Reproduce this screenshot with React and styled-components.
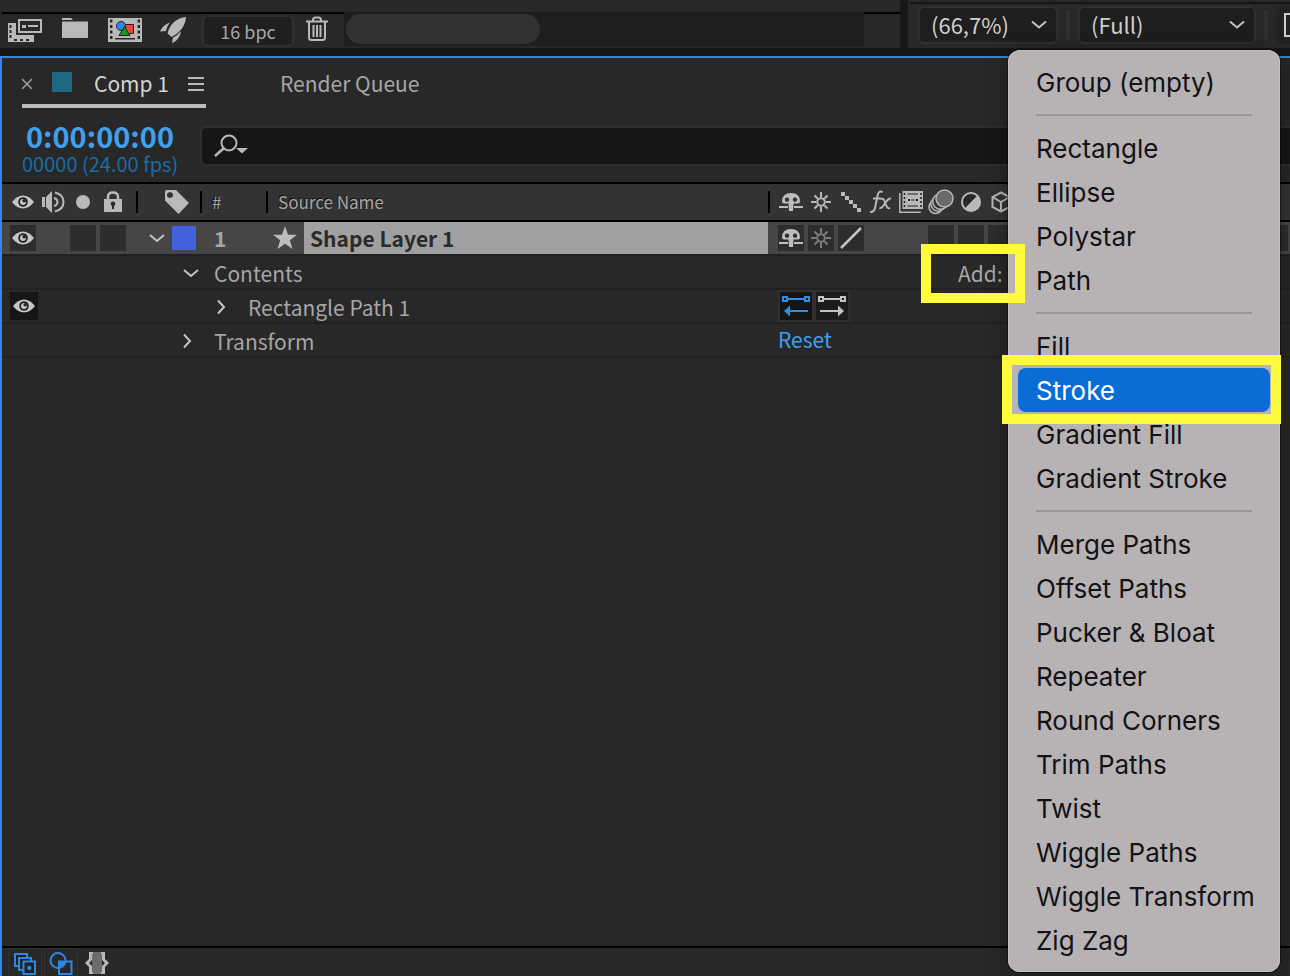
import React from "react";
import styled, { createGlobalStyle } from "styled-components";

const ui = `"Noto Sans CJK SC", "Noto Sans", sans-serif`;

const GlobalStyle = createGlobalStyle`
  *, *::before, *::after { box-sizing: border-box; }
  body { margin: 0; background: #171717; color: #a6a6a6; font-family: ${ui}; font-size: 21px; line-height: 28px; }
  button, input, select { font: inherit; color: inherit; margin: 0; padding: 0; border: 0; background: none; }
  svg { display: block; flex: none; }
`;

const Page = styled.div`
  position: relative;
  min-height: 100vh;
  display: flex;
  flex-direction: column;
  gap: 8px;
  overflow: hidden;
`;

/* ---------- top panels ---------- */
const TopArea = styled.div`
  display: flex;
  gap: 8px;
  height: 48px;
`;
const ProjectPanel = styled.section`
  flex: 1;
  min-width: 0;
  padding: 12px 0 0 2px;
  background: #282828;
`;
const ProjectBar = styled.div`
  display: flex;
  align-items: center;
  height: 36px;
  padding-left: 6px;
  border-top: 2px solid #000;
`;
const IconGroup = styled.div`
  display: flex;
  align-items: center;
  gap: 18px;
  padding-bottom: 2px;
`;
const IconButton = styled.button`
  display: flex;
  align-items: center;
  justify-content: center;
  flex: none;
`;
const DepthButton = styled.button`
  width: 92px;
  height: 32px;
  margin: 0 11px 0 16px;
  border: 2px solid #303030;
  border-radius: 6px;
  background: #1f1f1f;
  font-size: 18px;
  line-height: 26px;
`;
const DeleteButton = styled(IconButton)`
  padding-bottom: 4px;
`;
const ScrollTrack = styled.div`
  flex: 1;
  align-self: flex-start;
  height: 34px;
  margin: -2px 36px 0 15px;
  padding: 2px;
  background: #1e1e1e;
`;
const ScrollThumb = styled.div`
  width: 194px;
  height: 30px;
  border-radius: 15px;
  background: #323232;
`;
const ViewerPanel = styled.section`
  width: 382px;
  padding: 2px 0 0 2px;
  background: #282828;
  overflow: hidden;
`;
const ViewerBar = styled.div`
  display: flex;
  align-items: center;
  gap: 8px;
  height: 44px;
  padding-left: 8px;
  border-top: 2px solid #151515;
`;
const SelectBox = styled.div`
  display: flex;
  align-items: center;
  flex: none;
  width: ${(p) => p.$width}px;
  height: 38px;
  padding: 0 9px 0 11px;
  border: 2px solid #303030;
  border-radius: 6px;
  background: #1e1e1e;
  color: #cfcfcf;
  font-size: 22px;
  select { flex: 1; min-width: 0; padding-bottom: 2px; appearance: none; outline: 0; }
`;
const BarDivider = styled.span`
  flex: none;
  width: 4px;
  height: 30px;
  background: #303030;
`;
const ClippedButton = styled.button`
  flex: none;
  width: 48px;
  height: 38px;
  padding-left: 6px;
  border: 2px solid #222;
  border-radius: 6px;
  background: #222;
`;

/* ---------- timeline panel ---------- */
const Timeline = styled.section`
  flex: 1;
  display: flex;
  flex-direction: column;
  border-top: 2px solid #3c85cc;
  border-left: 2px solid #2f8af0;
  background: #282828;
`;
const Tabs = styled.div`
  display: flex;
  align-items: flex-start;
  height: 60px;
  padding-left: 20px;
  gap: 74px;
`;
const ActiveTab = styled.div`
  display: flex;
  align-items: center;
  width: 184px;
  height: 50px;
  padding-top: 4px;
  border-bottom: 4px solid #bdbdbd;
  color: #d4d4d4;
`;
const Swatch = styled.span`
  flex: none;
  width: 20px;
  height: 20px;
  margin: 0 22px 2px 20px;
  background: #1f6984;
`;
const TabButton = styled.button`
  height: 46px;
  padding-top: 4px;
`;
const TabTitle = styled.button`
  margin-right: auto;
`;
const Head = styled.div`
  display: flex;
  align-items: center;
  height: 64px;
  gap: 22px;
  padding-left: 20px;
`;
const TimeBox = styled.div`
  width: 156px;
  margin-bottom: 4px;
  text-align: center;
  white-space: nowrap;
`;
const Timecode = styled.div`
  color: #41a0ee;
  font-size: 29px;
  font-weight: 700;
  line-height: 32px;
`;
const Frames = styled.div`
  color: #176ea8;
  font-size: 20px;
  line-height: 26px;
`;
const SearchBox = styled.label`
  flex: 1;
  display: flex;
  align-items: center;
  height: 40px;
  margin-bottom: 8px;
  padding-left: 12px;
  border: 2px solid #2f2f2f;
  border-right: 0;
  border-radius: 6px 0 0 6px;
  background: #161616;
  input { flex: 1; outline: 0; }
`;
const Row = styled.div`
  display: flex;
  align-items: center;
  height: 34px;
  border-bottom: 2px solid #212121;
  white-space: nowrap;
`;
const HeaderRow = styled(Row)`
  height: 40px;
  border-top: 2px solid #000;
  border-bottom-color: #000;
  background: #333;
  font-size: 17px;
  text-shadow: -1px -1px 0 #111;
`;
const LayerRow = styled(Row)`
  background: #464646;
`;
const AvColumn = styled.div`
  display: flex;
  flex: none;
  width: 134px;
  padding-left: 6px;
`;
const Cell = styled.div`
  display: flex;
  align-items: center;
  justify-content: center;
  width: 30px;
`;
const SwitchButton = styled.button`
  display: flex;
  align-items: center;
  justify-content: center;
  flex: none;
  width: ${(p) => (p.$dark ? 28 : 26)}px;
  height: ${(p) => (p.$dark ? 28 : 26)}px;
  margin: 0 2px;
  background: ${(p) => (p.$empty ? "none" : p.$dark ? "#161616" : "#2d2d2d")};
`;
const Divider = styled.span`
  flex: none;
  width: 2px;
  height: 22px;
  background: ${(p) => (p.$clear ? "none" : "#000")};
`;
const LabelColumn = styled.div`
  display: flex;
  align-items: center;
  justify-content: flex-end;
  flex: none;
  gap: 6px;
  width: 62px;
  padding-right: ${(p) => p.$pad}px;
`;
const NumberColumn = styled.div`
  flex: none;
  width: 64px;
  padding-left: ${(p) => p.$pad}px;
`;
const NameHeading = styled.div`
  flex: 1;
  padding-left: 10px;
`;
const TypeColumn = styled.div`
  display: flex;
  justify-content: center;
  width: 36px;
  padding-right: 2px;
`;
const LayerName = styled.div`
  flex: 1;
  height: 32px;
  padding-left: 6px;
  background: #a0a0a0;
  color: #2a2a2a;
  font-weight: 700;
  line-height: 32px;
`;
const LayerLabel = styled.span`
  width: 24px;
  height: 24px;
  background: #4360e0;
`;
const Switches = styled.div`
  display: flex;
  align-items: center;
  flex: none;
  width: 520px;
  padding-left: ${(p) => (p.$values ? 8 : 6)}px;
`;
const LastSwitch = styled.span`
  width: 18px;
  height: 26px;
  margin: 0 2px 0 auto;
  background: #2d2d2d;
`;
const Property = styled.div`
  display: flex;
  align-items: center;
  flex: 1;
  gap: 14px;
  padding: 2px 0 0 ${(p) => p.$indent}px;
`;
const PathButton = styled.button`
  display: flex;
  align-items: center;
  justify-content: center;
  width: 36px;
  height: 32px;
  border: 2px solid #303030;
  background: ${(p) => (p.$on ? "#151515" : "#1c1c1c")};
`;
const ResetButton = styled.button`
  padding-bottom: 2px;
  color: #41a0ee;
`;
const AddButton = styled.button`
  position: relative;
  margin-left: 180px;
  padding-top: 2px;
`;
const Mark = styled.span`
  position: absolute;
  inset: ${(p) => p.$inset};
  border: 10px solid #fffb3c;
  z-index: 3;
  pointer-events: none;
`;
const Canvas = styled.div`
  flex: 1;
`;
const Footer = styled.div`
  display: flex;
  height: 30px;
  gap: 2px;
  padding-left: 6px;
  border-top: 2px solid #000;
  overflow: hidden;
`;
const FooterButton = styled.button`
  flex: none;
  display: flex;
  justify-content: center;
  width: 34px;
  height: 34px;
  padding-top: 3px;
  border: 1px solid ${(p) => (p.$flat ? "transparent" : "#323232")};
`;

/* ---------- menu ---------- */
const Menu = styled.div`
  position: absolute;
  z-index: 2;
  top: 50px;
  right: 10px;
  width: 272px;
  padding: 10px;
  border-radius: 12px;
  background: #b7b3b5;
  box-shadow: 0 0 0 1px rgba(0, 0, 0, 0.4), 0 4px 24px rgba(0, 0, 0, 0.35), inset 0 0 0 1px #c4c0c2;
  font-family: Inter, sans-serif;
`;
const MenuItem = styled.button`
  position: relative;
  display: block;
  width: 100%;
  height: 44px;
  padding: 2px 0 0 18px;
  border-radius: 8px;
  background: ${(p) => (p.$active ? "#0a6dd6" : "none")};
  color: ${(p) => (p.$active ? "#fff" : "#141214")};
  font-size: 26px;
  text-align: left;
  white-space: nowrap;
`;
const MenuSeparator = styled.hr`
  height: 2px;
  margin: 10px 18px;
  border: 0;
  background: #9c989a;
`;

/* ---------- icons ---------- */
const G = "#b9b9b9";

const CompsIcon = () => (
  <svg width="34" height="24" viewBox="0 0 34 24">
    <path fill={G} fillRule="evenodd" d="M0 5h8v3H8v9h18v7H0zM1.500 7v3h2V7zM1.500 12v3h2v-3zM1.500 17v3h2v-3zM6 21v2h3v-2zM12 21v2h3v-2zM18 21v2h3v-2z" />
    <rect x="11" y="2" width="22" height="12" fill="#282828" stroke={G} strokeWidth="2" />
    <path fill={G} d="M14 7h4v3h-4zM20 7h10v2H20z" />
  </svg>
);
const FolderIcon = () => (
  <svg width="30" height="24" viewBox="0 0 30 24">
    <path fill={G} d="M2 0h9l2 2H2zM2 3.500h26V20H2z" />
  </svg>
);
const FilmIcon = () => (
  <svg width="34" height="24" viewBox="0 0 34 24">
    <path fill={G} d="M0 0h34v24H0z" />
    <path stroke="#282828" strokeWidth="2.500" strokeDasharray="3 2.500" d="M3.200 1.500v22M30.800 1.500v22" />
    <path fill="#282828" d="M7 20h20v1.500H7z" />
    <path fill="#ee4540" stroke="#222" d="M17.500 6.500h8v9h-8z" />
    <circle cx="13" cy="8" r="4.500" fill="#2f8ae6" stroke="#222" />
    <path fill="#139a1d" stroke="#222" d="M16.500 8.500l5.500 9H11z" />
  </svg>
);
const RocketIcon = () => (
  <svg width="26" height="26" viewBox="0 0 26 26">
    <path fill={G} d="M26 0C17 1 10 6 7.500 16.500l4 3.500C21 15 25.500 8 26 0z" />
    <path fill={G} d="M10 5.500C5 7 2 10 0 14.500l6-.5c.5-3 2-6 4-8.500zM21 14c-2 2.500-5 5-8 6.500l-1 5.500c5-2 8-6 9-12z" />
  </svg>
);
const TrashIcon = () => (
  <svg width="24" height="26" viewBox="0 0 24 26" fill="none" stroke={G} strokeWidth="2">
    <path d="M1 5.500h22M8 5V4q0-2.500 2.500-2.500h3Q16 1.500 16 4v1M4 6v15.500q0 2.500 2.500 2.500h11q2.500 0 2.500-2.500V6M8.500 9v12M12 9v12M15.500 9v12" />
  </svg>
);
const ChevronDown = () => (
  <svg width="16" height="10" viewBox="0 0 16 10" fill="none" stroke="#c4c4c4" strokeWidth="2">
    <path d="M1 1.500l7 6 7-6" />
  </svg>
);
const Twirl = ({ open }) => (
  <svg width="20" height="20" viewBox="0 0 20 20" fill="none" stroke="#c4c4c4" strokeWidth="2">
    <path d={open ? "M4 7l7 6 7-6" : "M4 3.500l6 6.500-6 6.500"} />
  </svg>
);
const MenuLines = () => (
  <svg width="20" height="20" viewBox="0 0 20 20" fill={G}>
    <path d="M2 4h16v2H2zM2 10h16v2H2zM2 16h16v2H2z" />
  </svg>
);
const CloseIcon = () => (
  <svg width="10" height="12" viewBox="0 0 10 12" stroke="#a0a0a0" strokeWidth="1.500">
    <path d="M0 2l10 10M10 2L0 12" />
  </svg>
);
const SearchIcon = () => (
  <svg width="36" height="24" viewBox="0 0 36 24">
    <circle cx="15" cy="9" r="7.500" fill="none" stroke={G} strokeWidth="2" />
    <path d="M9.500 14.500L1 22" stroke={G} strokeWidth="2.500" />
    <path d="M22 14h12l-6 5.500z" fill={G} />
  </svg>
);
const EyeIcon = () => (
  <svg width="22" height="16" viewBox="0 0 22 16">
    <path d="M0 8Q5 1.500 11 1.500T22 8q-5 6.500-11 6.500T0 8z" fill="#c6c6c6" />
    <circle cx="11" cy="8" r="4.800" fill="#222" />
    <circle cx="11" cy="8" r="3" fill="#c6c6c6" />
    <circle cx="12.200" cy="6.800" r="1.800" fill="#222" />
  </svg>
);
const SpeakerIcon = () => (
  <svg width="24" height="22" viewBox="0 0 24 22">
    <path fill={G} d="M1 6h3v10H1zM5 6l6-6v22l-6-6z" />
    <path fill="none" stroke={G} strokeWidth="2" d="M13 7q3.500 1 3.500 4T13 15M14 1.500q8.500 2 8.500 9.500T14 20.500" />
  </svg>
);
const DotIcon = () => (
  <svg width="14" height="14" viewBox="0 0 14 14"><circle cx="7" cy="7" r="7" fill={G} /></svg>
);
const LockIcon = () => (
  <svg width="18" height="22" viewBox="0 0 18 22">
    <path fill="none" stroke={G} strokeWidth="2.500" d="M4 10V6q0-4.500 5-4.500T14 6v4" />
    <path fill={G} d="M0 8h18v13H0z" />
    <path fill="#282828" d="M9 10.500a2.300 2.300 0 0 1 1 4.400V18H8v-3.100a2.300 2.300 0 0 1 1-4.400z" />
  </svg>
);
const TagIcon = () => (
  <svg width="24" height="24" viewBox="0 0 24 24">
    <path fill={G} fillRule="evenodd" d="M0 2q0-2 2-2h9l13 13-10.500 11L0 10.500zM5 2a3 3 0 1 0 .01 0z" />
  </svg>
);
const StarIcon = () => (
  <svg width="24" height="24" viewBox="0 0 24 24">
    <path fill="#bdbdbd" d="M12 0l3 8.700h9l-7.200 5.500L19.500 23 12 17.700 4.500 23l2.700-8.800L0 8.700h9z" />
  </svg>
);
const ShyIcon = () => (
  <svg width="24" height="20" viewBox="0 0 24 20">
    <path fill="#bdbdbd" fillRule="evenodd" d="M3 9.500Q3 1 12 1t9 8.500q0 2-2 2h-4.500L14 19h-4l-.5-7.500H5q-2 0-2-2zM8 5.500a2.200 2.200 0 1 0 .01 0zM16 5.500a2.200 2.200 0 1 0 .01 0z" />
    <path fill="#bdbdbd" d="M0 14h9v2H0zM15 14h9v2h-9z" />
  </svg>
);
const SunIcon = ({ color = G }) => (
  <svg width="20" height="20" viewBox="0 0 20 20" fill="none" stroke={color} strokeWidth="2">
    <circle cx="10" cy="10" r="3.800" />
    <path d="M10 0v5M10 15v5M0 10h5M15 10h5M3.500 3.500L6.500 6.500M13.500 13.500l3 3M16.500 3.500l-3 3M6.500 13.500l-3 3" />
  </svg>
);
const StepsIcon = () => (
  <svg width="20" height="20" viewBox="0 0 20 20" fill={G}>
    <path d="M0 0h4v4H0zM4 4h4v4H4zM8 8h4v4H8zM12 12h4v4h-4zM16 16h4v4h-4z" />
  </svg>
);
const FxIcon = () => (
  <svg width="22" height="24" viewBox="0 0 22 24" fill="none" stroke={G} strokeWidth="2">
    <path d="M12.500 2.200Q8.500 0 7.500 6L5 18q-1 4.500-5 3.800M3 8.500h8" />
    <path d="M11 9q2.500-1 3.500 2l2 5q1 3 3.500 2M21 8.700q-2-.7-4 2l-4 5.500q-1.500 2.300-3.500 1.500" />
  </svg>
);
const FrameBlendIcon = () => (
  <svg width="24" height="22" viewBox="0 0 24 22">
    <path fill="none" stroke={G} strokeWidth="1.500" d="M.8 2v19.200h21" />
    <path fill={G} d="M3.500 0H24v18H3.500z" />
    <path stroke="#222" strokeWidth="1.500" strokeDasharray="2 2" d="M5.500 2v15M22 2v15" />
    <path fill="#222" d="M8.500 2.500h10.500v1H8.500zM8.500 14.500h10.500v1H8.500zM9 8h2v2H9zM17 8h2v2h-2zM12 8.500h4v1h-4z" />
  </svg>
);
const MotionBlurIcon = () => (
  <svg width="26" height="26" viewBox="0 0 26 26" stroke={G} strokeWidth="1.500">
    <circle cx="7.500" cy="18" r="6.500" fill="#333" />
    <circle cx="10" cy="15" r="7.200" fill="#333" />
    <circle cx="12.500" cy="12.500" r="7.800" fill="#333" />
    <circle cx="16.500" cy="9.500" r="8.500" fill="#6a6a6a" />
  </svg>
);
const AdjustmentIcon = () => (
  <svg width="22" height="22" viewBox="0 0 22 22">
    <circle cx="11" cy="11" r="9" fill="#282828" stroke={G} strokeWidth="2" />
    <path fill={G} d="M4.600 17.400A9 9 0 0 0 17.400 4.600z" />
  </svg>
);
const CubeIcon = () => (
  <svg width="20" height="22" viewBox="0 0 20 22" fill="none" stroke={G} strokeWidth="2">
    <path d="M10 1.500l8.500 4.500v10L10 20.500 1.500 16V6zM1.500 6L10 11l8.500-5M10 11v9.500" />
  </svg>
);
const SlashIcon = () => (
  <svg width="22" height="22" viewBox="0 0 22 22"><path d="M1 21L21 1" stroke="#c6c6c6" strokeWidth="2.500" /></svg>
);
const PathDirIcon = ({ reverse }) => {
  const c = reverse ? "#2f8eec" : "#c4c4c4";
  return (
    <svg width="28" height="22" viewBox="0 0 28 22" fill="none" stroke={c} strokeWidth="2">
      <path d="M1 2h4v4H1zM23 2h4v4h-4zM5 4h18" />
      {reverse ? <path d="M8 16h18" /> : <path d="M2 16h18" />}
      <path fill={c} stroke="none" d={reverse ? "M2 16l6-5.500v11z" : "M26 16l-6-5.500v11z"} />
    </svg>
  );
};
const FrameIcon = () => (
  <svg width="24" height="24" viewBox="0 0 24 24" fill="none" stroke="#cfcfcf" strokeWidth="2"><path d="M1 1h22v22H1z" /></svg>
);
const LayersIcon = () => (
  <svg width="24" height="24" viewBox="0 0 24 24" fill="#222" stroke="#2f86dc" strokeWidth="2">
    <path d="M2 2h12v12H2z" /><path d="M6 6h12v12H6z" /><path d="M10.500 9.500H22V22H10.500z" />
    <circle cx="16.300" cy="16" r="2.200" fill="#2f86dc" stroke="none" />
  </svg>
);
const ModesIcon = () => (
  <svg width="24" height="24" viewBox="0 0 24 24" fill="none" stroke="#2f86dc" strokeWidth="2">
    <path d="M10 10h6.500A8 8 0 0 1 10 16z" fill="#2f86dc" stroke="none" />
    <circle cx="9" cy="8.500" r="7.500" /><path d="M10 9.500h12.500V22H10z" />
  </svg>
);
const BracesIcon = () => (
  <svg width="24" height="24" viewBox="0 0 24 24">
    <path fill="#6c6c6c" d="M7 0h10v22H7z" />
    <path fill={G} d="M4 0h4v2H7v6l-3 3 3 3v6h1v2H4v-7l-4-4 4-4zM20 0h-4v2h1v6l3 3-3 3v6h-1v2h4v-7l4-4-4-4z" />
  </svg>
);

const menuGroups = [
  ["Group (empty)"],
  ["Rectangle", "Ellipse", "Polystar", "Path"],
  ["Fill", "Stroke", "Gradient Fill", "Gradient Stroke"],
  ["Merge Paths", "Offset Paths", "Pucker & Bloat", "Repeater", "Round Corners", "Trim Paths", "Twist", "Wiggle Paths", "Wiggle Transform", "Zig Zag"],
];

const headerSwitches = [ShyIcon, SunIcon, StepsIcon, FxIcon, FrameBlendIcon, MotionBlurIcon, AdjustmentIcon, CubeIcon];

function ShapeMenu() {
  return (
    <Menu role="menu" aria-label="Add">
      {menuGroups.map((group, i) => (
        <React.Fragment key={group[0]}>
          {i > 0 && <MenuSeparator />}
          {group.map((name) => (
            <MenuItem key={name} role="menuitem" $active={name === "Stroke"}>
              {name}
              {name === "Stroke" && <Mark $inset="-13px -11px -12px -16px" />}
            </MenuItem>
          ))}
        </React.Fragment>
      ))}
    </Menu>
  );
}

export default function App() {
  return (
    <Page>
      <GlobalStyle />
      <TopArea>
        <ProjectPanel>
          <ProjectBar>
            <IconGroup>
              <IconButton aria-label="Interpret footage"><CompsIcon /></IconButton>
              <IconButton aria-label="New folder"><FolderIcon /></IconButton>
              <IconButton aria-label="New composition"><FilmIcon /></IconButton>
              <IconButton aria-label="Project settings"><RocketIcon /></IconButton>
            </IconGroup>
            <DepthButton>16 bpc</DepthButton>
            <DeleteButton aria-label="Delete"><TrashIcon /></DeleteButton>
            <ScrollTrack><ScrollThumb /></ScrollTrack>
          </ProjectBar>
        </ProjectPanel>
        <ViewerPanel>
          <ViewerBar>
            <SelectBox $width={140}>
              <select aria-label="Magnification"><option>(66,7%)</option></select>
              <ChevronDown />
            </SelectBox>
            <BarDivider />
            <SelectBox $width={178}>
              <select aria-label="Resolution"><option>(Full)</option></select>
              <ChevronDown />
            </SelectBox>
            <BarDivider />
            <ClippedButton aria-label="Region of interest"><FrameIcon /></ClippedButton>
          </ViewerBar>
        </ViewerPanel>
      </TopArea>

      <Timeline>
        <Tabs>
          <ActiveTab>
            <IconButton aria-label="Close tab"><CloseIcon /></IconButton>
            <Swatch />
            <TabTitle>Comp 1</TabTitle>
            <IconButton aria-label="Panel menu"><MenuLines /></IconButton>
          </ActiveTab>
          <TabButton>Render Queue</TabButton>
        </Tabs>
        <Head>
          <TimeBox>
            <Timecode>0:00:00:00</Timecode>
            <Frames>00000 (24.00 fps)</Frames>
          </TimeBox>
          <SearchBox>
            <SearchIcon />
            <input type="text" aria-label="Search layers" />
          </SearchBox>
        </Head>

        <HeaderRow>
          <AvColumn>
            <Cell><EyeIcon /></Cell>
            <Cell><SpeakerIcon /></Cell>
            <Cell><DotIcon /></Cell>
            <Cell><LockIcon /></Cell>
          </AvColumn>
          <Divider />
          <LabelColumn $pad={11}><TagIcon /></LabelColumn>
          <Divider />
          <NumberColumn $pad={10}>#</NumberColumn>
          <Divider />
          <NameHeading>Source Name</NameHeading>
          <Divider />
          <Switches>
            {headerSwitches.map((Icon, i) => <Cell key={i}><Icon /></Cell>)}
          </Switches>
        </HeaderRow>

        <LayerRow>
          <AvColumn>
            <SwitchButton aria-label="Layer visibility"><EyeIcon /></SwitchButton>
            <SwitchButton $empty aria-label="Audio" />
            <SwitchButton aria-label="Solo" />
            <SwitchButton aria-label="Lock" />
          </AvColumn>
          <Divider $clear />
          <LabelColumn $pad={4}>
            <IconButton aria-label="Collapse layer"><Twirl open /></IconButton>
            <LayerLabel />
          </LabelColumn>
          <Divider $clear />
          <NumberColumn $pad={12}><b>1</b></NumberColumn>
          <Divider $clear />
          <TypeColumn><StarIcon /></TypeColumn>
          <LayerName>Shape Layer 1</LayerName>
          <Divider $clear />
          <Switches>
            <SwitchButton aria-label="Shy"><ShyIcon /></SwitchButton>
            <SwitchButton aria-label="Continuously rasterize"><SunIcon color="#7c7c7c" /></SwitchButton>
            <SwitchButton aria-label="Quality"><SlashIcon /></SwitchButton>
            <SwitchButton $empty aria-label="Effects" />
            <SwitchButton $empty aria-label="Frame blending" />
            <SwitchButton aria-label="Motion blur" />
            <SwitchButton aria-label="Adjustment layer" />
            <SwitchButton aria-label="3D layer" />
            <LastSwitch />
          </Switches>
        </LayerRow>

        <Row>
          <AvColumn />
          <Property $indent={44}>
            <IconButton aria-label="Collapse contents"><Twirl open /></IconButton>
            Contents
          </Property>
          <Switches $values>
            <AddButton aria-haspopup="menu">
              Add:
              <Mark $inset="-13px -22px -16px -37px" />
            </AddButton>
          </Switches>
        </Row>

        <Row>
          <AvColumn>
            <SwitchButton $dark aria-label="Path visibility"><EyeIcon /></SwitchButton>
          </AvColumn>
          <Property $indent={78}>
            <IconButton aria-label="Expand path"><Twirl /></IconButton>
            Rectangle Path 1
          </Property>
          <Switches $values>
            <PathButton $on aria-label="Reverse path direction"><PathDirIcon reverse /></PathButton>
            <PathButton aria-label="Forward path direction"><PathDirIcon /></PathButton>
          </Switches>
        </Row>

        <Row>
          <AvColumn />
          <Property $indent={44}>
            <IconButton aria-label="Expand transform"><Twirl /></IconButton>
            Transform
          </Property>
          <Switches $values><ResetButton>Reset</ResetButton></Switches>
        </Row>

        <Canvas />
        <Footer>
          <FooterButton aria-label="Toggle layer switches"><LayersIcon /></FooterButton>
          <FooterButton aria-label="Toggle transfer modes"><ModesIcon /></FooterButton>
          <FooterButton $flat aria-label="Toggle in and out"><BracesIcon /></FooterButton>
        </Footer>
      </Timeline>

      <ShapeMenu />
    </Page>
  );
}
